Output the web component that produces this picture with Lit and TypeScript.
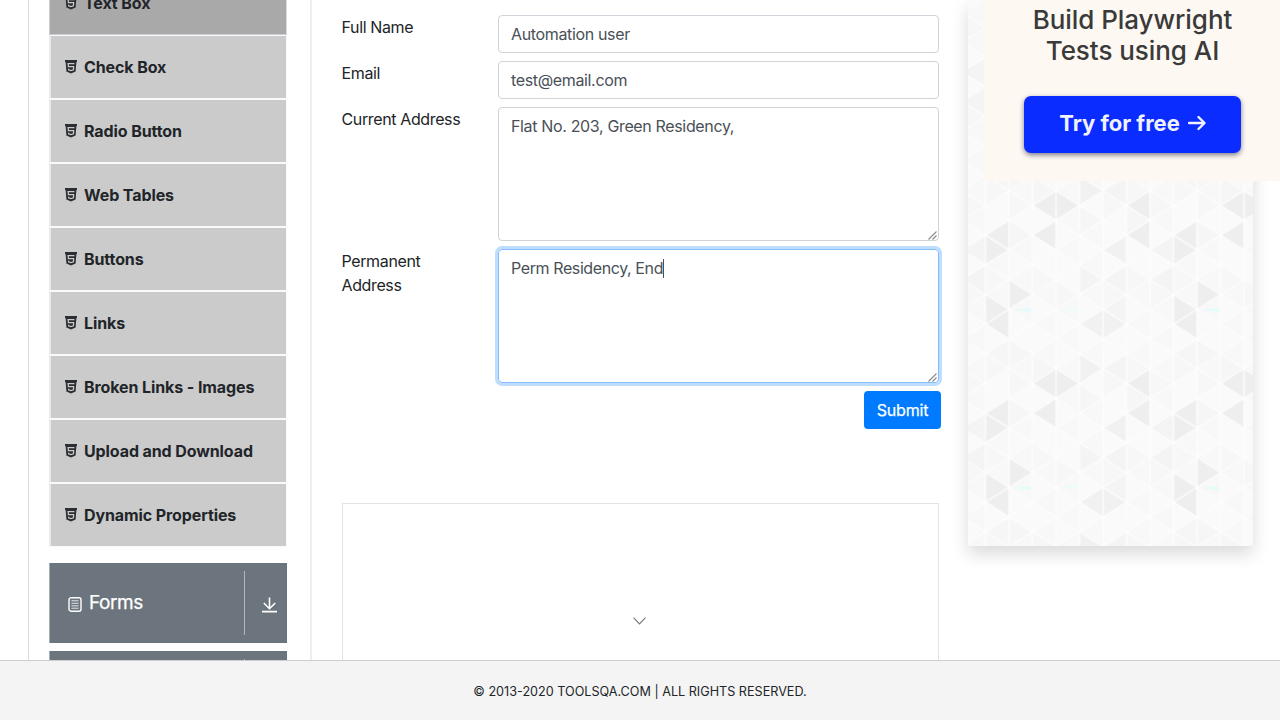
import { LitElement, html, svg, css } from "lit";
import { customElement } from "lit/decorators.js";

const COL = 23.5;
const ROW = 178 / 6;

type Tri = [col: number, dir: "l" | "r", y: number, fill: string];

const DARK = "#eeeeee";
const MID = "#f1f1f1";
const SOFT = "#f4f4f4";

const accents: Tri[] = [
  [2, "l", 0, DARK], [3, "r", 0, DARK], [6, "l", 0, DARK],
  [0, "l", 1, DARK], [0, "r", 1.5, DARK], [2, "l", 1, DARK], [6, "l", 1, DARK],
  [1, "r", 3, DARK], [0, "r", 3.5, DARK], [0, "l", 4, DARK],
  [5, "l", 1.5, MID], [4, "l", 4, MID], [5, "r", 4, MID], [4, "r", 5.5, MID],
  [5, "l", 5.5, SOFT], [4, "r", 2.5, SOFT], [5, "l", 2.5, SOFT], [7, "l", 1.5, SOFT],
  [5, "l", 3.5, SOFT], [7, "l", 2.5, SOFT],
  [0, "l", 5, "#f6f6f6"], [1, "r", 1, "#f6f6f6"], [1, "r", 5, "#f6f6f6"],
  [4, "r", 0.5, "#f6f6f6"], [6, "r", 0.5, "#f6f6f6"], [2, "r", 5.5, "#f6f6f6"],
];

function tri([c, d, y, fill]: Tri, dy = 0) {
  const x0 = c * COL;
  const x1 = x0 + COL;
  const yy = (y + dy) * ROW;
  const h = ROW / 2;
  const pts = d === "l"
    ? `${x0},${yy} ${x1},${yy - h} ${x1},${yy + h}`
    : `${x1},${yy} ${x0},${yy - h} ${x0},${yy + h}`;
  return svg`<polygon points=${pts} fill=${fill}></polygon>`;
}

function tile() {
  const base: Tri[] = [];
  for (let c = 0; c < 8; c++) {
    for (let r = 0; r < 7; r++) {
      const even = c % 2 === 0;
      const k = r % 6;
      base.push([c, "l", even ? r : r - 0.5, (c * 5 + k * 3) % 4 === 0 ? "#fafafa" : "#f8f8f8"]);
      base.push([c, "r", even ? r - 0.5 : r, (c * 3 + k * 5) % 3 === 0 ? "#f7f7f7" : "#fafafa"]);
    }
  }
  const lines: string[] = [];
  for (let c = 0; c <= 8; c++) lines.push(`M${c * COL} 0V178`);
  for (let k = -5; k < 12; k++) {
    lines.push(`M0 ${k * ROW}L188 ${(k + 4) * ROW}`);
    lines.push(`M0 ${k * ROW}L188 ${(k - 4) * ROW}`);
  }
  return svg`
    <rect width="188" height="178" fill="#f9f9f9"></rect>
    ${base.map((t) => tri(t))}
    ${accents.map((t) => tri(t))}
    ${accents.filter((t) => t[2] === 0).map((t) => tri(t, 6))}
    ${accents.filter((t) => t[2] === 5.5).map((t) => tri(t, -6))}
    <path d=${lines.join("")} stroke="#fdfdfd" stroke-width="1.3" fill="none"></path>
    <path d="M28 104.6L42 103.2L46 104L45 106Z" fill="#dcfdfd"></path>
    <path d="M73 104.3L84 102.8L94 103.4V105Z" fill="#ecfdfd"></path>`;
}

const htmlIcon = html`<svg class="badge" viewBox="0 0 12 14" width="12" height="14">
  <path d="M0 0H12V2H11.4L10.6 11.6L6 13.4L1.4 11.6L0.6 2H0Z" fill="#2b2f33"/>
  <path d="M9.4 3.6H3.1L3.4 6.6H8.7L8.4 9.7L6 10.5L3.6 9.7L3.5 8.7" fill="none" stroke="#cbcbcb" stroke-width="1.2"/>
</svg>`;

const grip = html`<svg class="grip" viewBox="0 0 9 9" width="9" height="9">
  <path d="M0.5 8.5L8.5 0.5M4.5 8.5L8.5 4.5" stroke="#8a8a8a" stroke-width="1.1" fill="none"/>
</svg>`;

@customElement("app-root")
export class AppRoot extends LitElement {
  static styles = css`
    :host { display: block; width: 1280px; height: 720px; overflow: hidden; background: #fff;
      font-family: Inter, "Liberation Sans", sans-serif; font-size: 16px; line-height: 24px; color: #212529; }
    * { box-sizing: border-box; }
    svg { display: block; flex: none; }
    .main { display: flex; height: 660px; overflow: hidden; }
    .left { width: 284px; margin-left: 28px; border-left: 1px solid #dcdcdc; border-right: 2px solid #eee;
      padding-left: 20px; flex: none; }
    .menu { list-style: none; margin: -29px 0 16px; padding: 0; width: 238px; }
    .item { height: 64px; display: flex; align-items: center; gap: 7px; padding-left: 14px;
      background: #cbcbcb; border: 1px solid #fafafa; border-left: 2px solid #e9eaec; font-weight: 700; letter-spacing: -0.1px; }
    .item.active { background: #a9a9a9; border-color: #c8ccd4; border-left-width: 1px; border-right-color: #d5d9e0; padding-left: 15px; }
    .group { width: 238px; height: 80px; margin-bottom: 8px; background: #6c757d; color: #fff; display: flex;
      align-items: center; border-left: 1px solid #a8adb2; }
    .title { display: flex; align-items: center; gap: 7px; flex: 1; padding-left: 18px; font-size: 19px; letter-spacing: -0.45px;
      -webkit-text-stroke: 0.25px #fff; }
    .glyph { margin-top: 2px; }
    .toggle { width: 43px; height: 64px; border-left: 1px solid #b5b6b7; display: flex; align-items: center; padding: 4px 0 0 17px; }
    .form { width: 599px; margin-left: 29.5px; padding-top: 15px; flex: none; }
    .row { display: flex; margin-bottom: 8px; }
    .label { width: 156.5px; height: 24px; flex: none; letter-spacing: -0.37px; }
    .narrow { width: 120px; margin-right: 36.5px; }
    .field { position: relative; width: 440.5px; height: 38px; border: 1px solid #ced4da; border-radius: 4px;
      padding: 6px 12px; color: #495057; letter-spacing: -0.35px; }
    .area { height: 134px; }
    .focus { border-color: #80bdff; box-shadow: 0 0 0 3px #bfdeff; letter-spacing: -0.4px; }
    .caret { display: inline-block; width: 1px; height: 19px; background: #495057; vertical-align: -4px; }
    .grip { position: absolute; right: 1px; bottom: 0; }
    .actions { display: flex; justify-content: flex-end; margin-right: -0.5px; }
    .submit { height: 38px; width: 77px; border: 0; border-radius: 4px; background: #007bff; color: #fff;
      font: inherit; letter-spacing: -0.2px; padding: 0; -webkit-text-stroke: 0.25px #fff; }
    .frame { margin-top: 74px; width: 597px; height: 170px; border: 1px solid #e3e3e3; padding: 113px 0 0 290.5px; }
    .side { width: 285px; height: 546px; margin-left: 27.5px; flex: none; box-shadow: 0 8px 16px rgba(0,0,0,.15);
      position: relative; }
    .ad { position: absolute; left: 16px; top: 0; width: 296px; height: 181px; background: #fdf8f2;
      display: flex; flex-direction: column; align-items: center; padding: 4px 0 0 1px; }
    .headline { font-weight: 550; font-size: 26px; line-height: 31px; text-align: center; color: #3a3a3a; white-space: nowrap;
      letter-spacing: -0.05px; }
    .cta { margin-top: 30px; width: 217px; height: 57px; border-radius: 7px; background: #0a2cff; color: #f0f2ff;
      box-shadow: 0 2px 5px rgba(40,40,70,.6); display: flex; align-items: center; justify-content: center; gap: 8px;
      font-weight: 650; font-size: 22px; white-space: nowrap; padding-bottom: 3px; }
    .footer { height: 60px; background: #f4f4f4; border-top: 1px solid #ccc; display: flex; align-items: center;
      justify-content: center; font-size: 12.64px; padding-top: 3px; white-space: nowrap; }
  `;

  render() {
    const items = ["Text Box", "Check Box", "Radio Button", "Web Tables", "Buttons", "Links",
      "Broken Links - Images", "Upload and Download", "Dynamic Properties"];
    return html`
      <div class="main">
        <div class="left">
          <ul class="menu">
            ${items.map((t, i) => html`<li class="item ${i === 0 ? "active" : ""}">${htmlIcon}<span>${t}</span></li>`)}
          </ul>
          ${this.group("Forms")}
          ${this.group("")}
        </div>
        <div class="form">
          <div class="row"><div class="label">Full Name</div><div class="field">Automation user</div></div>
          <div class="row"><div class="label">Email</div><div class="field">test@email.com</div></div>
          <div class="row"><div class="label">Current Address</div><div class="field area">Flat No. 203, Green Residency,${grip}</div></div>
          <div class="row"><div class="label narrow">Permanent Address</div><div class="field area focus">Perm Residency, End<span class="caret"></span>${grip}</div></div>
          <div class="actions"><button class="submit">Submit</button></div>
          <div class="frame">
            <svg width="13" height="8" viewBox="0 0 13 8"><path d="M0.5 0.7L6.5 6.9L12.5 0.7" fill="none" stroke="#777" stroke-width="1.1"/></svg>
          </div>
        </div>
        <div class="side">
          <svg width="285" height="546">
            <defs>
              <pattern id="mesh" patternUnits="userSpaceOnUse" x="17.5" y="27.5" width="188" height="178">${tile()}</pattern>
            </defs>
            <rect width="285" height="546" fill="url(#mesh)"></rect>
          </svg>
          <div class="ad">
            <div class="headline">Build Playwright<br>Tests using AI</div>
            <div class="cta"><span>Try for free</span>
              <svg width="18" height="16" viewBox="0 0 18 16"><path d="M1 8H16M10.5 2L16.5 8L10.5 14" fill="none" stroke="#f0f2ff" stroke-width="2.4" stroke-linecap="round" stroke-linejoin="round"/></svg>
            </div>
          </div>
        </div>
      </div>
      <div class="footer">© 2013-2020 TOOLSQA.COM | ALL RIGHTS RESERVED.</div>
    `;
  }

  private group(name: string) {
    return html`<div class="group">
      <div class="title">
        ${name ? html`<svg class="glyph" width="14" height="15" viewBox="0 0 14 15">
          <rect x="1" y="0.8" width="12" height="13.4" rx="2" fill="none" stroke="#fff" stroke-width="1.4"/>
          <path d="M3.4 3.8H10.6M3.4 6.3H10.6M3.4 8.8H10.6M3.4 11.2H10.6" stroke="#e3e5e7" stroke-width="1"/>
        </svg><span>${name}</span>` : ""}
      </div>
      <div class="toggle">
        <svg width="15" height="16" viewBox="0 0 15 16"><path d="M7.5 0.5V11.5M1.8 6L7.5 11.7L13.2 6M0 14.6H15" fill="none" stroke="#fff" stroke-width="1.6"/></svg>
      </div>
    </div>`;
  }
}
